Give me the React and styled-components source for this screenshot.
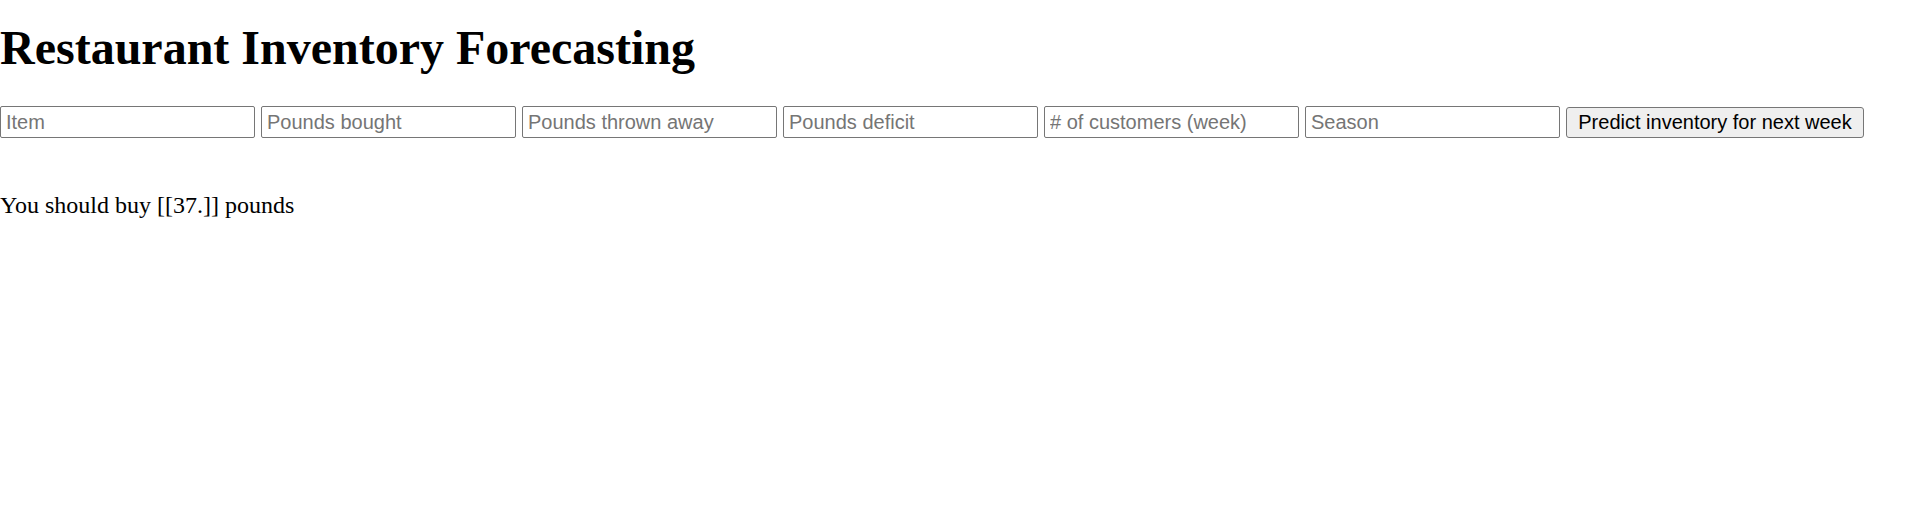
import React from "react";
import styled, { createGlobalStyle } from "styled-components";

const GlobalStyle = createGlobalStyle`
  body {
    margin: 0;
    background: #fff;
    color: #000;
    font-family: "Liberation Serif", "Times New Roman", serif;
  }
`;

const Page = styled.div`
  display: flex;
  flex-direction: column;
`;

const Title = styled.h1`
  font-size: 48px;
  font-weight: 700;
  line-height: 55px;
  margin: 20px 0 31px;
`;

const Form = styled.form`
  display: flex;
  flex-direction: row;
  align-items: flex-start;
  gap: 6px;
`;

const Field = styled.input`
  box-sizing: border-box;
  width: 255px;
  height: 32px;
  margin: 0;
  padding: 0 5px;
  border: 1px solid #767676;
  border-radius: 2px;
  background: #fff;
  font-family: "Liberation Sans", Arial, sans-serif;
  font-size: 20px;
  color: #000;

  &::placeholder {
    color: #757575;
  }
`;

const Button = styled.button`
  box-sizing: border-box;
  width: 298px;
  height: 31px;
  margin: 1px 0 0;
  padding: 0 9px;
  border: 1px solid #767676;
  border-radius: 3px;
  background: #efefef;
  font-family: "Liberation Sans", Arial, sans-serif;
  font-size: 20px;
  color: #000;
  cursor: pointer;
`;

const Result = styled.p`
  font-size: 24px;
  line-height: 27px;
  margin: 54px 0 0;
`;

const fields = [
  "Item",
  "Pounds bought",
  "Pounds thrown away",
  "Pounds deficit",
  "# of customers (week)",
  "Season",
];

const App = () => {
  return (
    <Page>
      <GlobalStyle />
      <Title>Restaurant Inventory Forecasting</Title>
      <Form onSubmit={(e) => e.preventDefault()}>
        {fields.map((f) => (
          <Field key={f} type="text" placeholder={f} />
        ))}
        <Button type="submit">Predict inventory for next week</Button>
      </Form>
      <Result>You should buy [[37.]] pounds</Result>
    </Page>
  );
};

export default App;
